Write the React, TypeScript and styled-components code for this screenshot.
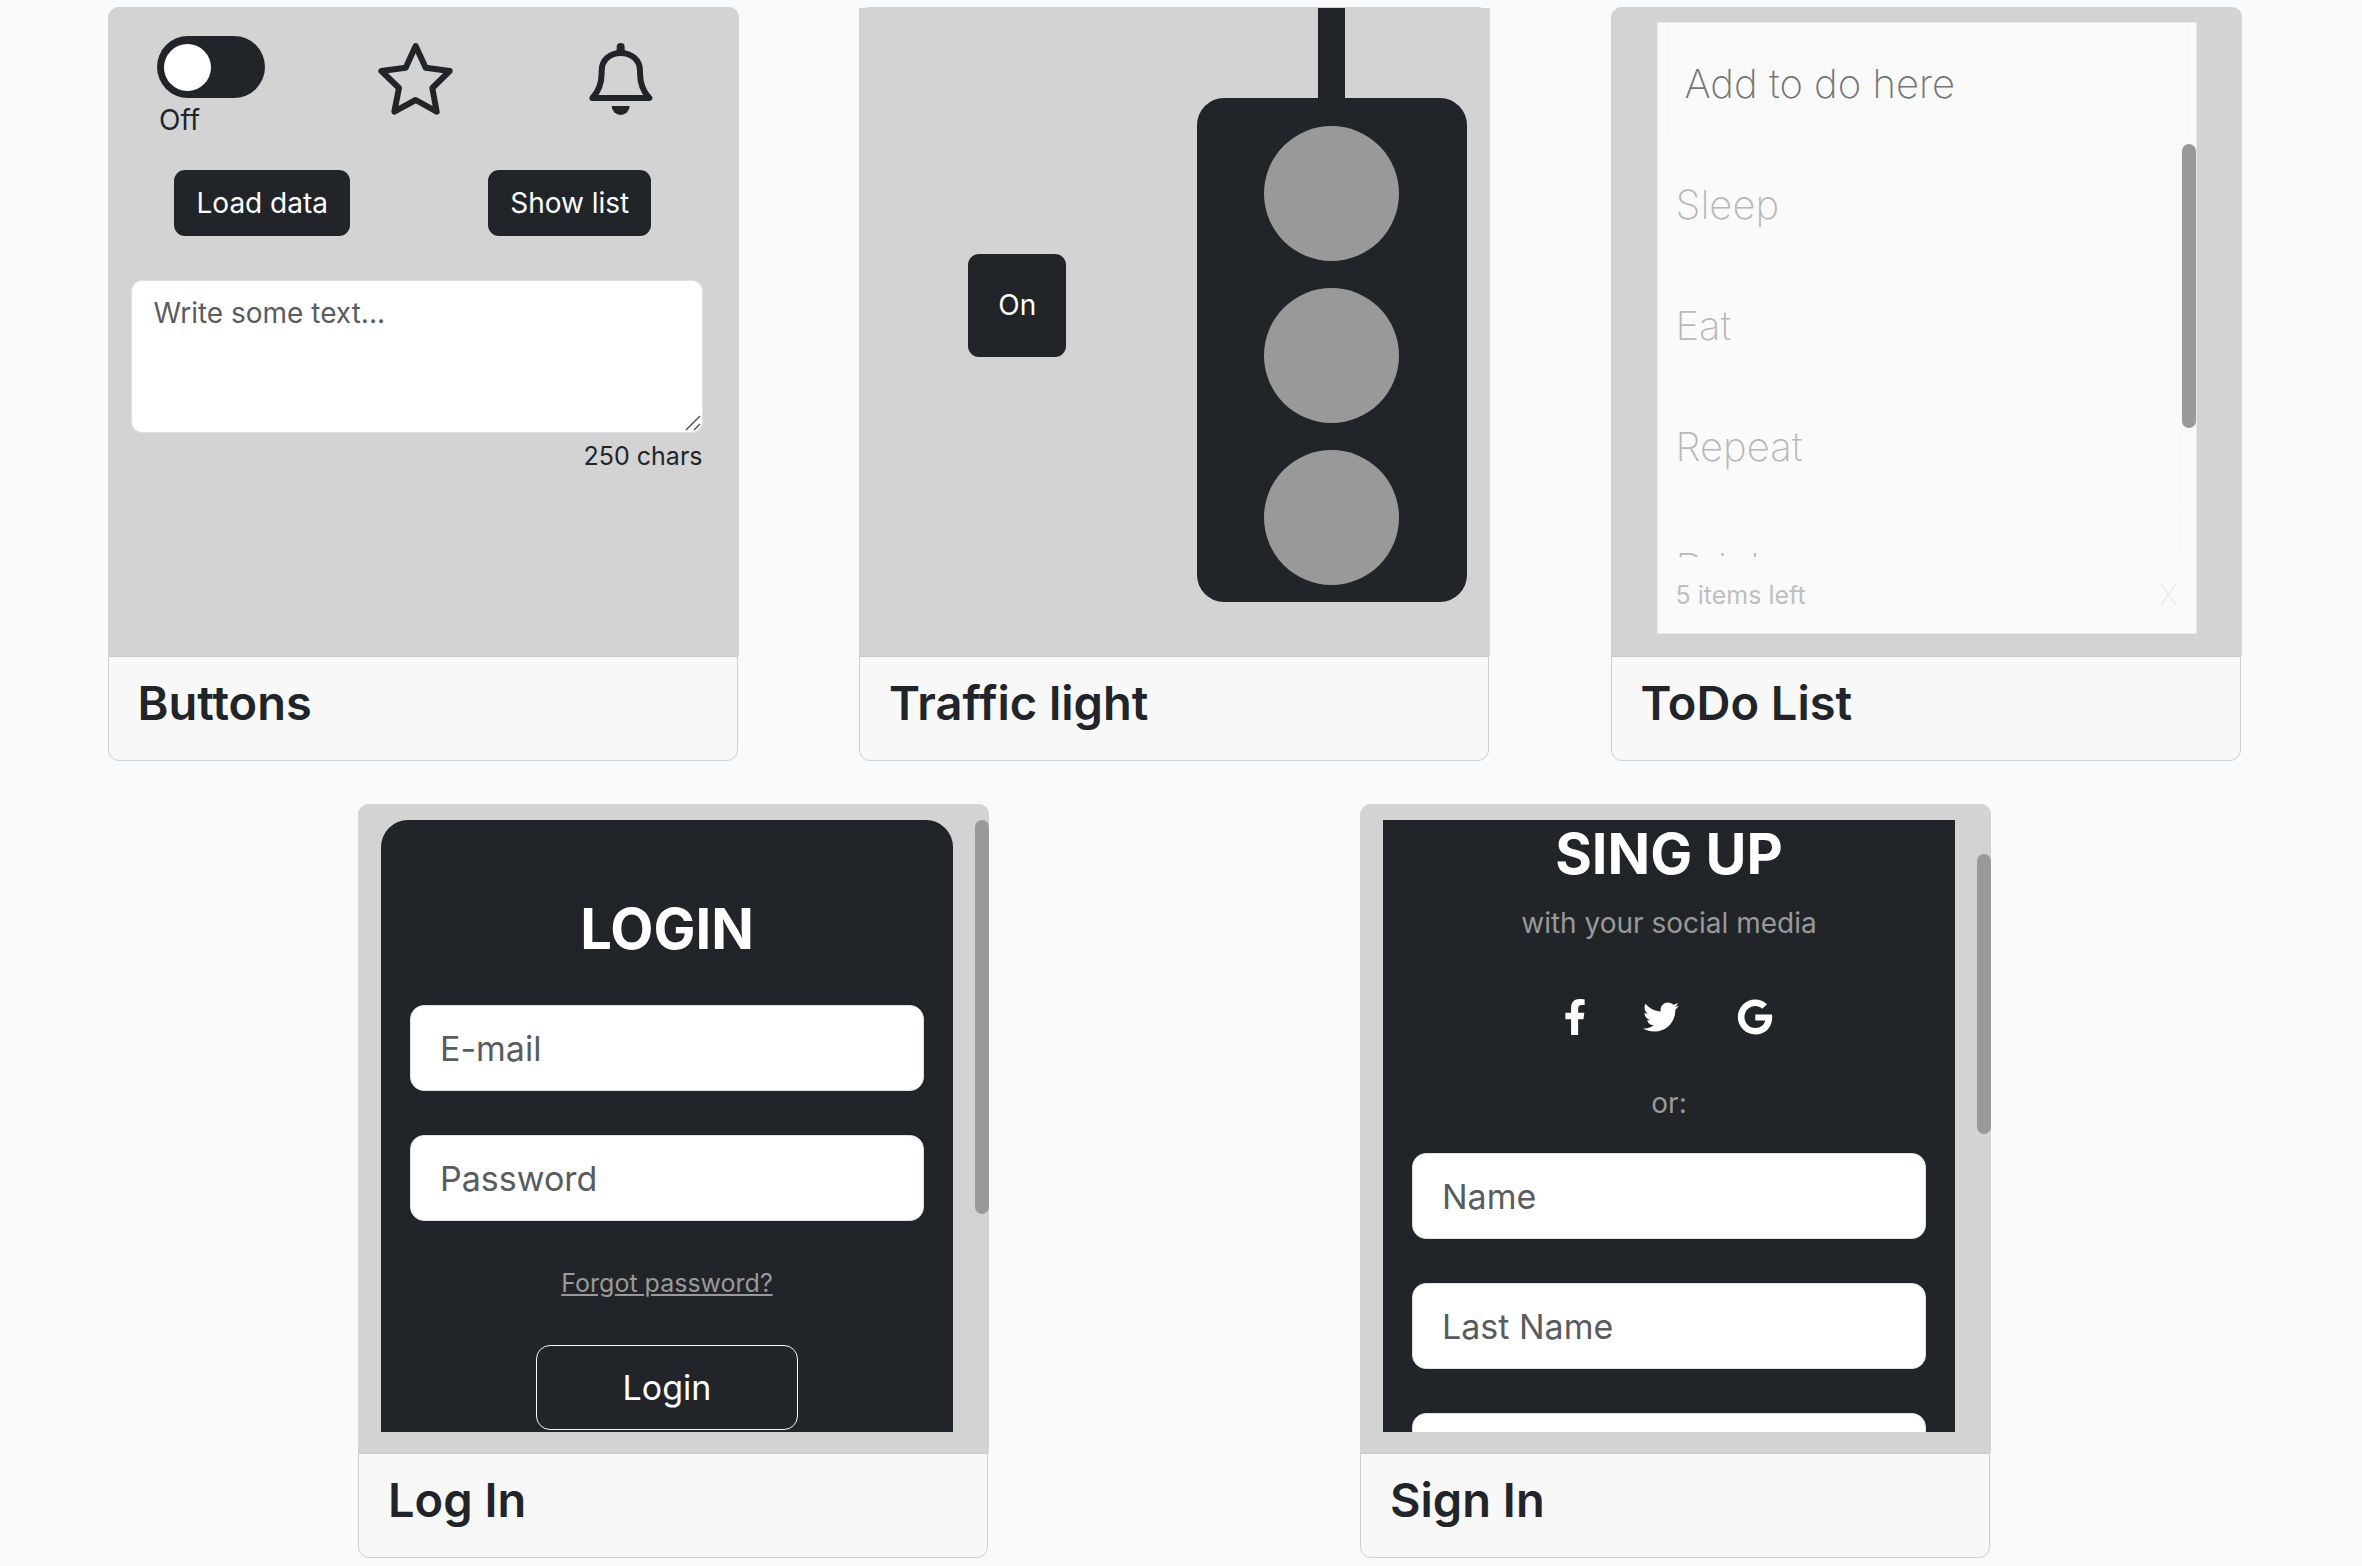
import React, { useState } from "react";
import styled, { createGlobalStyle, css } from "styled-components";
import { FaGoogle, FaTwitter } from "react-icons/fa";

const ink = "#212529";
const grey = "#d3d3d3";
const mid = "#999999";

const GlobalStyle = createGlobalStyle`
  *, *::before, *::after { box-sizing: border-box; }
  body {
    margin: 0;
    background: #f8fafc;
    color: ${ink};
    font-family: Inter, "Liberation Sans", sans-serif;
    font-size: 28px;
    line-height: 42px;
  }
  button, input, textarea { font: inherit; color: inherit; margin: 0; }
  h1, h2, p, ul { margin: 0; padding: 0; }
`;

/* ---------- page and cards ---------- */

const Gallery = styled.main`
  display: flex;
  flex-wrap: wrap;
  justify-content: space-evenly;
  row-gap: 43px;
  margin-left: -14px;
  padding: 7px 0;
`;

const CardBox = styled.article`
  width: 630px;
  border: 1px solid #cfd0d2;
  border-radius: 11px;
  background: #f8f8f8;
`;

const Preview = styled.div<{ $square?: boolean }>`
  position: relative;
  height: 648px;
  margin-right: -2px;
  overflow: hidden;
  background: ${grey};
  border-radius: ${(p) => (p.$square ? "0" : "10px 10px 0 0")};
  box-shadow: -1px 0 0 ${grey}, 0 -1px 0 ${(p) => (p.$square ? "transparent" : grey)};
`;

const CardBody = styled.div`
  padding: 16px 29px 27px;
  border-top: 1px solid #c9c9c9;
`;

const CardTitle = styled.h2`
  font-size: 47px;
  line-height: 60px;
  font-weight: 600;
`;

function Card({ title, square, children }: { title: string; square?: boolean; children: React.ReactNode }) {
  return (
    <CardBox>
      <Preview $square={square}>{children}</Preview>
      <CardBody>
        <CardTitle>{title}</CardTitle>
      </CardBody>
    </CardBox>
  );
}

const ScrollThumb = styled.span<{ $top: number; $length: number }>`
  position: absolute;
  top: ${(p) => p.$top}px;
  right: 0;
  width: 14px;
  height: ${(p) => p.$length}px;
  border-radius: 7px;
  background: ${mid};
`;

/* ---------- buttons card ---------- */

const ButtonsPanel = styled.div`
  display: flex;
  flex-direction: column;
  padding: 28px 15px 0 0;
`;

const Columns = styled.div`
  display: grid;
  grid-auto-flow: column;
  grid-auto-columns: 1fr;
  justify-items: center;
  align-items: start;
`;

const SwitchField = styled.div`
  display: flex;
  flex-direction: column;
`;

const SwitchInput = styled.input`
  appearance: none;
  display: flex;
  align-items: center;
  width: 108px;
  height: 62px;
  padding: 0 7px;
  border-radius: 31px;
  background: ${ink};

  &::before {
    content: "";
    width: 47px;
    height: 47px;
    border-radius: 50%;
    background: #ffffff;
  }
  &:checked { justify-content: flex-end; }
`;

const SwitchLabel = styled.label`
  padding-left: 2px;
  line-height: 44px;
`;

const IconButton = styled.button`
  display: flex;
  margin-top: 7px;
  padding: 0;
  border: 0;
  background: none;
`;

const LineIcon = styled.svg`
  width: 72px;
  height: 72px;
  overflow: visible;
  fill: none;
  stroke: currentColor;
  stroke-width: 18px;
  stroke-linecap: round;
  stroke-linejoin: round;
`;

function StarIcon() {
  return (
    <LineIcon viewBox="33 39 216 216" aria-hidden="true">
      <path d="M140 48L170 113L242 123L190 174L203 245L140 210L76 245L90 174L37 123L110 113Z" />
    </LineIcon>
  );
}

function BellIcon() {
  return (
    <LineIcon viewBox="33 39 216 216" aria-hidden="true">
      <path d="M140 51V64" strokeWidth="24" style={{ strokeWidth: 24 }} />
      <path d="M55 204C76 182 83 152 83 128V122C83 90 108 69 140 69S198 90 198 122V128C198 152 205 182 226 204Z" />
      <path d="M113 228H167A27 27 0 0 1 113 228Z" fill="currentColor" style={{ strokeWidth: 0 }} />
    </LineIcon>
  );
}

const ButtonRow = styled(Columns)`
  padding-top: 28px;
`;

const DarkButton = styled.button<{ $tall?: boolean }>`
  padding: 12px 22px;
  border: 0;
  border-radius: 11px;
  background: ${ink};
  color: #ffffff;
  ${(p) =>
    p.$tall &&
    css`
      padding: 30px 30px 31px;
    `}
`;

const MessageField = styled.div`
  display: flex;
  flex-direction: column;
  padding: 44px 21px 0 22px;
`;

const MessageBox = styled.div`
  position: relative;
  display: flex;
`;

const Message = styled.textarea`
  width: 100%;
  height: 153px;
  padding: 11px 22px;
  resize: none;
  border: 1px solid #dee2e6;
  border-radius: 11px;
  background: #ffffff;
  &::placeholder { color: #595c5f; opacity: 1; }
`;

const Grip = styled.svg`
  position: absolute;
  right: 2px;
  bottom: 2px;
`;

const CharCount = styled.p`
  margin-top: 4px;
  font-size: 25px;
  line-height: 39px;
  text-align: right;
`;

function ButtonsDemo() {
  const [on, setOn] = useState(false);
  return (
    <ButtonsPanel>
      <Columns>
        <SwitchField>
          <SwitchInput id="power" type="checkbox" checked={on} onChange={(e) => setOn(e.target.checked)} />
          <SwitchLabel htmlFor="power">{on ? "On" : "Off"}</SwitchLabel>
        </SwitchField>
        <IconButton aria-label="Favourite"><StarIcon /></IconButton>
        <IconButton aria-label="Notifications"><BellIcon /></IconButton>
      </Columns>
      <ButtonRow>
        <DarkButton>Load data</DarkButton>
        <DarkButton>Show list</DarkButton>
      </ButtonRow>
      <MessageField>
        <MessageBox>
          <Message aria-label="Message" maxLength={250} placeholder="Write some text..." />
          <Grip width="16" height="16" viewBox="0 0 16 16" stroke="#4a4a4a" strokeWidth="1.4" aria-hidden="true">
            <path d="M1 15L15 1M9 15L15 9" />
          </Grip>
        </MessageBox>
        <CharCount>250 chars</CharCount>
      </MessageField>
    </ButtonsPanel>
  );
}

/* ---------- traffic light card ---------- */

const TrafficPanel = styled.div`
  display: grid;
  grid-template-columns: 1fr 1fr;
  justify-items: center;
  align-items: center;
  margin-right: 1px;
`;

const Signal = styled.div`
  display: flex;
  flex-direction: column;
  align-items: center;
`;

const Pole = styled.div`
  width: 27px;
  height: 90px;
  background: ${ink};
`;

const Housing = styled.div`
  display: flex;
  flex-direction: column;
  gap: 27px;
  padding: 28px 68px 17px 67px;
  border-radius: 27px;
  background: ${ink};
`;

const Lamp = styled.div`
  width: 135px;
  height: 135px;
  border-radius: 50%;
  background: ${mid};
`;

function TrafficDemo() {
  return (
    <TrafficPanel>
      <DarkButton $tall>On</DarkButton>
      <Signal>
        <Pole />
        <Housing>
          <Lamp />
          <Lamp />
          <Lamp />
        </Housing>
      </Signal>
    </TrafficPanel>
  );
}

/* ---------- to-do card ---------- */

const TodoPanel = styled.section`
  width: 540px;
  margin: 14px auto 0;
  border: 1px solid #e6e6e6;
  background: #fafafa;
`;

const TodoHeader = styled.div`
  display: flex;
  padding: 0 8px;
`;

const TodoInput = styled.input`
  width: 100%;
  height: 121px;
  padding: 0 18px;
  border: 1px solid #f5f5f5;
  border-top: 0;
  background: transparent;
  font-size: 40px;
  font-weight: 200;
  &::placeholder { color: #757575; opacity: 1; }
`;

const TodoScroller = styled.div`
  position: relative;
  height: 413px;
  overflow: hidden;
`;

const TodoItems = styled.ul`
  margin-right: 14px;
  list-style: none;
`;

const TodoItem = styled.li`
  height: 121px;
  padding: 0 18px;
  border: solid #f5f5f5;
  border-width: 1px 1px 0 0;
  color: #b8b8b8;
  font-size: 40px;
  line-height: 120px;
  font-weight: 200;
`;

const TodoFooter = styled.div`
  display: flex;
  align-items: center;
  justify-content: space-between;
  height: 76px;
  padding: 0 18px;
  color: #bfbfbf;
  font-size: 25px;
`;

const ClearButton = styled.button`
  padding: 0;
  border: 0;
  background: none;
  color: #efe6e6;
  font-size: 28px;
  font-weight: 200;
`;

function TodoDemo() {
  return (
    <TodoPanel>
      <TodoHeader>
        <TodoInput aria-label="New to do" placeholder="Add to do here" />
      </TodoHeader>
      <TodoScroller>
        <TodoItems>
          {["Sleep", "Eat", "Repeat", "Drink"].map((item) => (
            <TodoItem key={item}>{item}</TodoItem>
          ))}
        </TodoItems>
        <ScrollThumb $top={0} $length={284} />
      </TodoScroller>
      <TodoFooter>
        <span>5 items left</span>
        <ClearButton aria-label="Delete all">X</ClearButton>
      </TodoFooter>
    </TodoPanel>
  );
}

/* ---------- form cards ---------- */

const FormPanel = styled.form<{ $rounded?: boolean }>`
  display: flex;
  flex-direction: column;
  align-items: center;
  height: 612px;
  margin: 15px 36px 0 22px;
  padding: ${(p) => (p.$rounded ? "76px" : "1px")} 29px 0;
  overflow: hidden;
  border-radius: ${(p) => (p.$rounded ? "27px 27px 0 0" : "0")};
  background: ${ink};
`;

const FormTitle = styled.h1`
  color: #ffffff;
  font-size: 56px;
  line-height: 66px;
  font-weight: 700;
`;

const Fields = styled.div`
  display: flex;
  flex-direction: column;
  gap: 44px;
  width: 100%;
`;

const LoginFields = styled(Fields)`
  margin: 43px 0 42px;
`;

const TextInput = styled.input`
  width: 100%;
  height: 86px;
  padding: 0 29px;
  border: 1px solid #dee2e6;
  border-radius: 14px;
  background: #ffffff;
  font-size: 34px;
  &::placeholder { color: #595c5f; opacity: 1; }
`;

const ForgotLink = styled.a`
  color: ${mid};
  font-size: 25px;
  line-height: 40px;
`;

const OutlineButton = styled.button`
  flex: none;
  width: 262px;
  height: 85px;
  margin-top: 42px;
  border: 1px solid #f8f9fa;
  border-radius: 14px;
  background: transparent;
  color: #ffffff;
  font-size: 34px;
`;

const Hint = styled.p`
  color: ${mid};
`;

const HintUnderTitle = styled(Hint)`
  margin-top: 15px;
`;

const SocialRow = styled.div`
  display: flex;
  gap: 58px;
  margin: 55px 0 47px;
`;

const SocialLink = styled.a`
  display: flex;
  color: #ffffff;
  svg {
    width: auto;
    height: 36px;
  }
`;

const SignFields = styled(Fields)`
  margin-top: 29px;
`;

const FacebookMark = styled.svg`
  fill: currentColor;
  aspect-ratio: 20 / 36;
`;

function FacebookIcon() {
  return (
    <FacebookMark viewBox="20 0 280 512" aria-hidden="true">
      <path d="M279.14 288l14.22-92.66h-88.91v-60.13c0-25.35 12.42-50.06 52.24-50.06h40.42V6.26S260.43 0 225.36 0c-73.22 0-121.08 44.38-121.08 124.72v70.62H22.89V288h81.39v224h100.17V288z" />
    </FacebookMark>
  );
}

function LoginDemo() {
  return (
    <>
      <FormPanel $rounded onSubmit={(e) => e.preventDefault()}>
        <FormTitle>LOGIN</FormTitle>
        <LoginFields>
          <TextInput type="email" aria-label="E-mail" placeholder="E-mail" />
          <TextInput type="password" aria-label="Password" placeholder="Password" />
        </LoginFields>
        <ForgotLink href="#forgot">Forgot password?</ForgotLink>
        <OutlineButton type="submit">Login</OutlineButton>
      </FormPanel>
      <ScrollThumb $top={15} $length={394} />
    </>
  );
}

function SignDemo() {
  return (
    <>
      <FormPanel onSubmit={(e) => e.preventDefault()}>
        <FormTitle>SING UP</FormTitle>
        <HintUnderTitle>with your social media</HintUnderTitle>
        <SocialRow>
          <SocialLink href="#facebook" aria-label="Facebook"><FacebookIcon /></SocialLink>
          <SocialLink href="#twitter" aria-label="Twitter"><FaTwitter /></SocialLink>
          <SocialLink href="#google" aria-label="Google"><FaGoogle /></SocialLink>
        </SocialRow>
        <Hint>or:</Hint>
        <SignFields>
          <TextInput aria-label="Name" placeholder="Name" />
          <TextInput aria-label="Last Name" placeholder="Last Name" />
          <TextInput aria-label="E-mail" />
        </SignFields>
      </FormPanel>
      <ScrollThumb $top={49} $length={280} />
    </>
  );
}

export default function App() {
  return (
    <>
      <GlobalStyle />
      <Gallery>
        <Card title="Buttons"><ButtonsDemo /></Card>
        <Card title="Traffic light" square><TrafficDemo /></Card>
        <Card title="ToDo List"><TodoDemo /></Card>
        <Card title="Log In"><LoginDemo /></Card>
        <Card title="Sign In"><SignDemo /></Card>
      </Gallery>
    </>
  );
}
